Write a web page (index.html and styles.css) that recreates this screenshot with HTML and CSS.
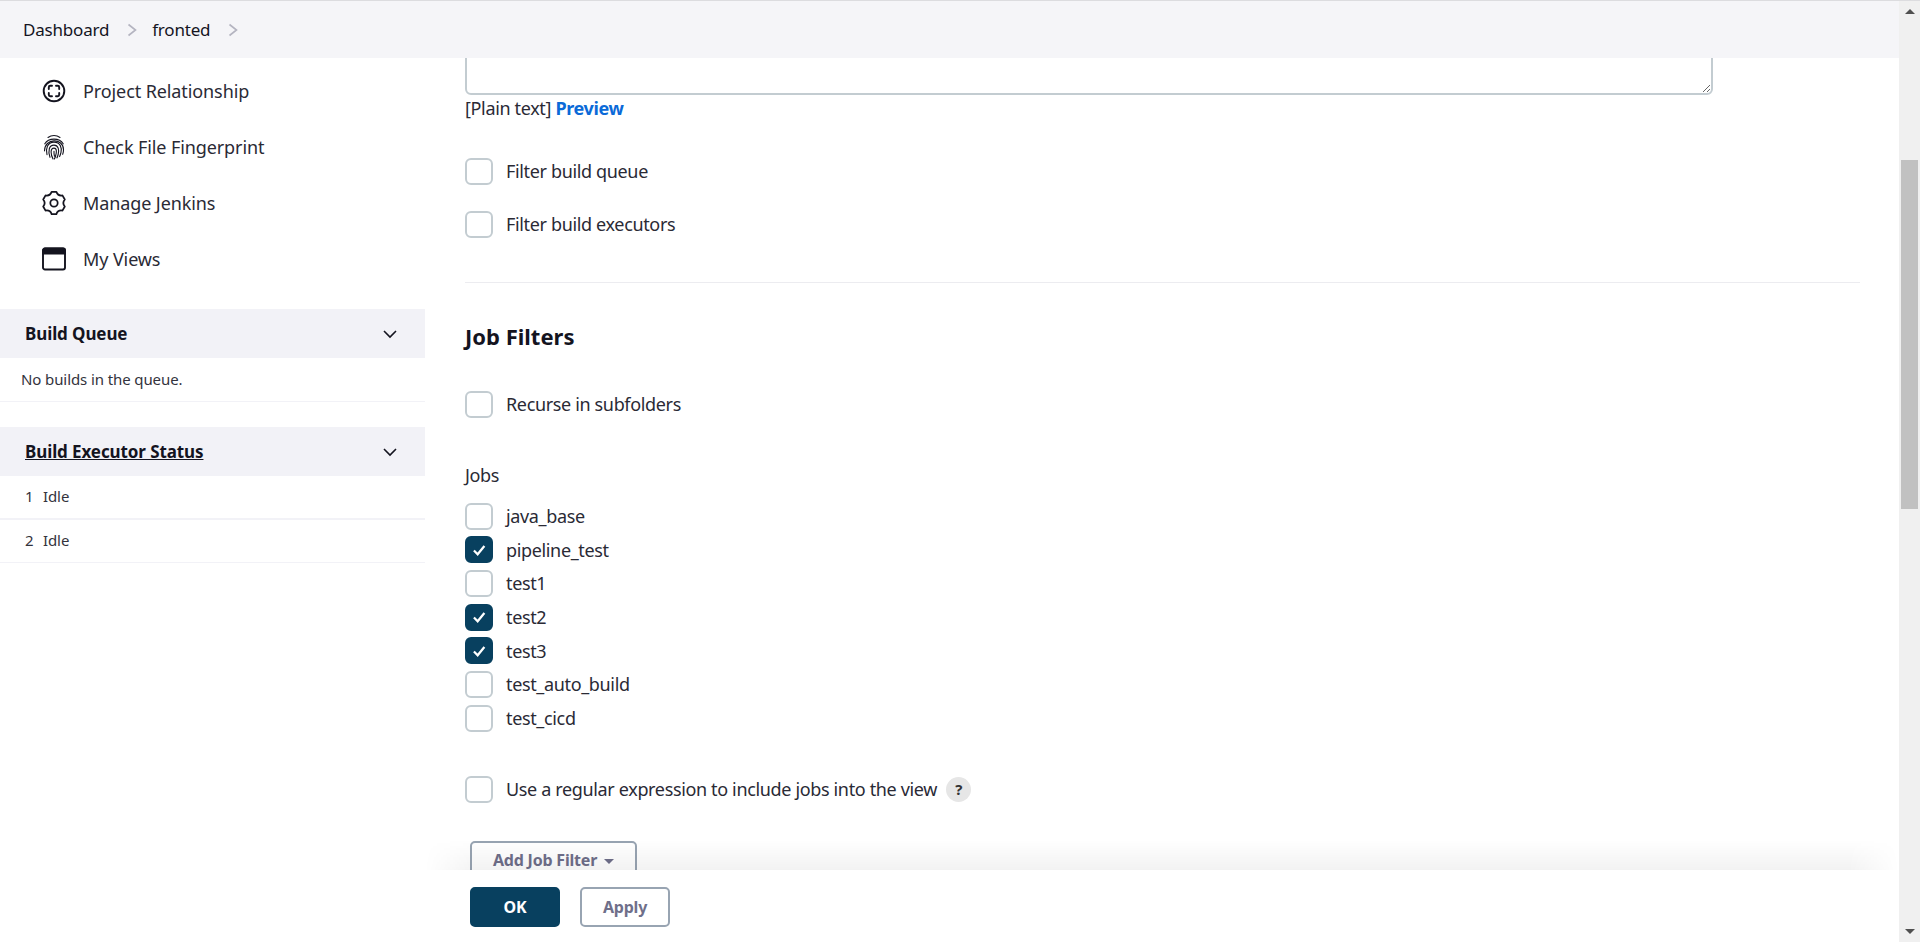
FILE: index.html
```html
<!DOCTYPE html>
<html lang="en">
<head>
    <meta charset="UTF-8">
    <title>Edit View - fronted</title>
    <link rel="stylesheet" href="styles.css">
</head>
<body>
<div class="page">
    <nav class="breadcrumbs">
        <a href="#">Dashboard</a>
        <svg class="crumb-sep" viewBox="0 0 12 16"><path d="M2.5 2.5 9.5 8 2.5 13.5"/></svg>
        <a href="#">fronted</a>
        <svg class="crumb-sep" viewBox="0 0 12 16"><path d="M2.5 2.5 9.5 8 2.5 13.5"/></svg>
    </nav>

    <div class="layout">
        <aside class="sidebar">
            <ul class="side-tasks">
                <li>
                    <svg class="task-icon" viewBox="0 0 24 24">
                        <circle cx="12" cy="12" r="10.3"/>
                        <path d="M6.8 10V8.2a1.4 1.4 0 0 1 1.4-1.4H10M14 6.8h1.8a1.4 1.4 0 0 1 1.4 1.4V10M17.2 14v1.8a1.4 1.4 0 0 1-1.4 1.4H14M10 17.2H8.2a1.4 1.4 0 0 1-1.4-1.4V14"/>
                    </svg>
                    <a href="#">Project Relationship</a>
                </li>
                <li>
                    <svg class="task-icon thin" viewBox="0 0 24 24" preserveAspectRatio="none">
                        <path d="M6 3.2C9.500 .8 14.500 .8 18 3.200"/>
                        <path d="M2.800 9C6.500 3.200 17.500 3.200 21.200 9"/>
                        <path d="M2.500 15.500C2.500 3.500 21.500 3.500 21.500 14.500c0 1.500-.3 3-.8 4.200"/>
                        <path d="M5 19c-1.500-5 .2-11.500 7-11.500 6.500 0 8 5.500 7 9.500-.3 1.500-.9 2.800-1.400 3.800"/>
                        <path d="M8 21.500C5.800 15.500 7 10.200 12 10.200c4.500 0 5.300 4.800 4.200 8.500-.3 1.300-.8 2.500-1.300 3.300"/>
                        <path d="M11 23c-2.200-3.500-3.200-10 1-10 3 0 2.800 4 1.500 7.500-.3.900-.7 1.800-1.100 2.500"/>
                        <path d="M12 16c-.1 1.800.1 3.200.5 4.500"/>
                    </svg>
                    <a href="#">Check File Fingerprint</a>
                </li>
                <li>
                    <svg class="task-icon tall" viewBox="-1 -1 26 28">
                        <path d="M9.44 .97H14.56Q16.25 5.64 21.14 4.77L23.7 9.2Q20.5 13 23.7 16.8L21.14 21.23Q16.25 20.36 14.56 25.03H9.44Q7.75 20.36 2.86 21.23L.3 16.8Q3.5 13 .3 9.2L2.86 4.77Q7.75 5.64 9.44 .97z" stroke-linejoin="round"/>
                        <circle cx="12" cy="13" r="4"/>
                    </svg>
                    <a href="#">Manage Jenkins</a>
                </li>
                <li>
                    <svg class="task-icon" viewBox="0 0 24 24">
                        <rect x="1" y="1.500" width="22" height="21" rx="2"/>
                        <path class="fill" d="M1 3.500a2 2 0 0 1 2-2h18a2 2 0 0 1 2 2V6.500H1z"/>
                    </svg>
                    <a href="#">My Views</a>
                </li>
            </ul>

            <section class="pane">
                <header class="pane-header">
                    <span class="pane-title">Build Queue</span>
                    <svg class="pane-chevron" viewBox="0 0 16 10"><path d="M2 2 8 8 14 2"/></svg>
                </header>
                <div class="pane-row pane-empty">No builds in the queue.</div>
            </section>

            <section class="pane">
                <header class="pane-header">
                    <a class="pane-title" href="#">Build Executor Status</a>
                    <svg class="pane-chevron" viewBox="0 0 16 10"><path d="M2 2 8 8 14 2"/></svg>
                </header>
                <div class="pane-row thick"><span class="exec-num">1</span>Idle</div>
                <div class="pane-row short"><span class="exec-num">2</span>Idle</div>
            </section>
        </aside>

        <main class="main">
            <div class="form-scroll">
                <textarea class="desc-box"></textarea>
                <div class="desc-links">[Plain text] <a href="#">Preview</a></div>

                <div class="check-group">
                    <label class="check"><input type="checkbox"><span>Filter build queue</span></label>
                    <label class="check"><input type="checkbox"><span>Filter build executors</span></label>
                </div>

                <hr class="divider">

                <h2 class="section-title">Job Filters</h2>

                <label class="check recurse"><input type="checkbox"><span>Recurse in subfolders</span></label>

                <div class="jobs-label">Jobs</div>
                <div class="job-list">
                    <label class="check"><input type="checkbox"><span>java_base</span></label>
                    <label class="check"><input type="checkbox" checked><span>pipeline_test</span></label>
                    <label class="check"><input type="checkbox"><span>test1</span></label>
                    <label class="check"><input type="checkbox" checked><span>test2</span></label>
                    <label class="check"><input type="checkbox" checked><span>test3</span></label>
                    <label class="check"><input type="checkbox"><span>test_auto_build</span></label>
                    <label class="check"><input type="checkbox"><span>test_cicd</span></label>
                </div>

                <div class="regex-row">
                    <label class="check"><input type="checkbox"><span>Use a regular expression to include jobs into the view</span></label>
                    <a class="help" href="#">?</a>
                </div>

                <button class="btn add-filter" type="button">Add Job Filter <i class="caret"></i></button>
            </div>

            <div class="bottom-bar">
                <button class="btn primary" type="button">OK</button>
                <button class="btn" type="button">Apply</button>
            </div>
        </main>
    </div>
</div>

<div class="scrollbar">
    <i class="arrow up"></i>
    <div class="thumb"></div>
    <i class="arrow down"></i>
</div>
</body>
</html>
```

FILE: styles.css
```css
* {
    box-sizing: border-box;
}
html, body {
    height: 100%;
}
body {
    margin: 0;
    display: flex;
    overflow: hidden;
    background: #fff;
    color: #14141f;
    font-family: "Noto Sans", "Open Sans", sans-serif;
    font-size: 18px;
    letter-spacing: -0.35px;
    border-top: 1px solid #dcdcdf;
}
a {
    color: inherit;
    text-decoration: none;
}

.page {
    flex: 1;
    min-width: 0;
    display: flex;
    flex-direction: column;
}

/* breadcrumb bar */
.breadcrumbs {
    height: 57px;
    flex: none;
    display: flex;
    align-items: center;
    padding-left: 23px;
    background: #f5f5f8;
    font-size: 17px;
    letter-spacing: -0.2px;
}
.crumb-sep {
    width: 12px;
    height: 16px;
    margin: 0 14px 0 17px;
    fill: none;
    stroke: #b4b4c0;
    stroke-width: 1.6;
}

.layout {
    flex: 1;
    min-height: 0;
    display: flex;
}

/* left column */
.sidebar {
    width: 425px;
    flex: none;
}
.side-tasks {
    list-style: none;
    margin: 5px 0 22px;
    padding: 0 0 0 42px;
    letter-spacing: -0.1px;
}
.side-tasks li {
    height: 56px;
    display: flex;
    align-items: center;
    gap: 17px;
    color: #2a2a35;
}
.task-icon {
    width: 24px;
    height: 24px;
    flex: none;
    fill: none;
    stroke: #14141f;
    stroke-width: 1.9;
    stroke-linecap: round;
}
.task-icon.thin {
    height: 26px;
    stroke-width: 1.1;
}
.task-icon.tall {
    height: 26px;
}
.task-icon .fill {
    fill: #14141f;
}

.pane {
    margin-bottom: 25px;
}
.pane-header {
    height: 49px;
    display: flex;
    align-items: center;
    justify-content: space-between;
    padding: 0 27px 0 25px;
    background: #f2f2f7;
}
.pane-title {
    font-weight: 700;
    font-size: 17px;
    letter-spacing: -0.1px;
}
a.pane-title {
    text-decoration: underline;
}
.pane-chevron {
    width: 16px;
    height: 10px;
    fill: none;
    stroke: #14141f;
    stroke-width: 1.6;
}
.pane-row {
    height: 44px;
    display: flex;
    align-items: center;
    padding: 0 0 2px 25px;
    font-size: 15px;
    letter-spacing: -0.1px;
    color: #33333d;
    border-bottom: 1px solid #f2f2f7;
}
.pane-row.thick {
    border-bottom-width: 2px;
}
.pane-row.short {
    height: 43px;
}
.pane-empty {
    padding-left: 21px;
}
.exec-num {
    width: 18px;
}

/* form */
.main {
    flex: 1;
    min-width: 0;
    display: flex;
    flex-direction: column;
}
.form-scroll {
    flex: 1;
    min-height: 0;
    overflow: hidden;
    padding: 0 39px 0 40px;
    color: #2a2a35;
}
.desc-box {
    display: block;
    width: 1248px;
    height: 57px;
    margin-top: -20px;
    border: 2px solid #c3ccd1;
    border-radius: 6px;
    background: #fff;
}
.desc-links {
    line-height: 26px;
}
.desc-links a {
    color: #0b6ad8;
    font-weight: 700;
}
.check-group {
    margin-top: 36px;
    display: flex;
    flex-direction: column;
    gap: 25px;
}
.check {
    display: flex;
    align-items: center;
    gap: 13px;
    height: 28px;
}
.check input {
    appearance: none;
    -webkit-appearance: none;
    width: 28px;
    height: 27px;
    margin: 0;
    flex: none;
    border: 2.5px solid #c3ccd1;
    border-radius: 6px;
    background: #fff;
}
.check input:checked {
    border-color: #08405f;
    background: #08405f url("data:image/svg+xml,%3Csvg xmlns='http://www.w3.org/2000/svg' viewBox='0 0 16 16'%3E%3Cpath d='M3.500 8.500 6.800 11.800 12.800 4.500' fill='none' stroke='white' stroke-width='2'/%3E%3C/svg%3E") center / 18px no-repeat;
}
.divider {
    height: 1px;
    margin: 44px 0 0;
    border: 0;
    background: #ececf0;
}
.section-title {
    margin: 38px 0 0;
    font-size: 22px;
    line-height: 30px;
    font-weight: 700;
    letter-spacing: 0;
    color: #14141f;
}
.recurse {
    margin-top: 39px;
}
.jobs-label {
    margin-top: 44px;
    line-height: 26px;
}
.job-list {
    margin-top: 14px;
    display: flex;
    flex-direction: column;
    gap: 5.700px;
}
.regex-row {
    margin-top: 43px;
    display: flex;
    align-items: center;
    gap: 9px;
}
.help {
    width: 25px;
    height: 25px;
    display: flex;
    align-items: center;
    justify-content: center;
    border-radius: 50%;
    background: #e6e6e6;
    color: #333;
    font-size: 15px;
    font-weight: 700;
}

.btn {
    height: 40px;
    padding: 0 22px;
    border: 2px solid #98a4b2;
    border-radius: 5px;
    background: #fff;
    color: #6f6f8a;
    font-family: inherit;
    font-size: 16px;
    line-height: 1;
    letter-spacing: -0.2px;
    font-weight: 700;
}
.add-filter {
    display: block;
    margin: 38px 0 0 5px;
    width: 167px;
    padding: 0 0 3px;
}
.caret {
    display: inline-block;
    margin-left: 3px;
    vertical-align: 2px;
    border: 5.500px solid transparent;
    border-top-color: #6f6f8a;
    border-bottom: 0;
}
.bottom-bar {
    position: relative;
    height: 72px;
    flex: none;
    display: flex;
    gap: 20px;
    padding: 17px 0 0 45px;
    background: #fff;
}
.bottom-bar::before {
    content: "";
    position: absolute;
    left: 0;
    right: 0;
    top: -30px;
    height: 30px;
    background: linear-gradient(to bottom, rgba(0, 0, 0, 0), rgba(0, 0, 0, 0.05));
    pointer-events: none;
    -webkit-mask-image: linear-gradient(to right, transparent, #000 50px, #000 calc(100% - 50px), transparent);
}
.bottom-bar .btn {
    width: 90px;
    padding: 0;
}
.btn.primary {
    border-color: #08405f;
    background: #08405f;
    color: #fff;
}

/* scrollbar column on the right */
.scrollbar {
    width: 21px;
    flex: none;
    display: flex;
    flex-direction: column;
    align-items: center;
    background: #f0f0f0;
}
.thumb {
    width: 17px;
    height: 349px;
    margin: 146px 0 auto;
    background: #c1c1c1;
}
.arrow {
    flex: none;
    border-left: 5px solid transparent;
    border-right: 5px solid transparent;
}
.arrow.up {
    margin-top: 8px;
    border-bottom: 5px solid #505050;
}
.arrow.down {
    margin-bottom: 8px;
    border-top: 5px solid #505050;
}
```
